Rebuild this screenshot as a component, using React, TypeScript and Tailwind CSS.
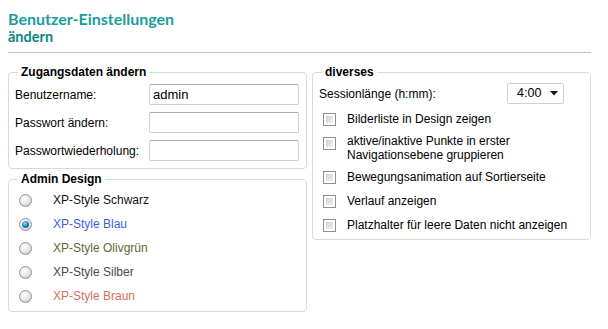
import React from 'react';

type Design = { label: string; color: string; checked?: boolean };

const designs: Design[] = [
  { label: 'XP-Style Schwarz', color: 'text-[#111111]' },
  { label: 'XP-Style Blau', color: 'text-[#3d5ee0]', checked: true },
  { label: 'XP-Style Olivgrün', color: 'text-[#66662e]' },
  { label: 'XP-Style Silber', color: 'text-[#4a4a4a]' },
  { label: 'XP-Style Braun', color: 'text-[#d3705c]' },
];

const options = [
  { label: 'Bilderliste in Design zeigen' },
  { label: 'aktive/inaktive Punkte in erster Navigationsebene gruppieren', multi: true },
  { label: 'Bewegungsanimation auf Sortierseite' },
  { label: 'Verlauf anzeigen' },
  { label: 'Platzhalter für leere Daten nicht anzeigen' },
];

function Radio({ checked }: { checked?: boolean }) {
  return (
    <span className="flex h-[13px] w-[13px] items-center justify-center rounded-full border border-[#8f9090] bg-[radial-gradient(circle_at_35%_30%,#ffffff,#e4e4e4_55%,#c8c8c8)]">
      {checked && (
        <span className="h-[7px] w-[7px] rounded-full bg-[radial-gradient(circle_at_40%_35%,#8fdcff,#1b86c4_50%,#0b3f66)]" />
      )}
    </span>
  );
}

function Checkbox() {
  return (
    <span className="block h-[13px] w-[13px] border border-[#8e8f8f] bg-white p-[2px]">
      <span className="block h-full w-full bg-gradient-to-br from-[#cfcfcf] to-[#f4f4f4]" />
    </span>
  );
}

function Field({ label, value }: { label: string; value?: string }) {
  return (
    <div className="flex h-[21px] items-center">
      <span className="w-[134px]">{label}</span>
      <div className="flex h-[21px] w-[150px] items-center rounded-[2px] border border-[#cdd1d5] border-t-[#a9adb1] px-[3px] text-[13px]">
        {value}
      </div>
    </div>
  );
}

export default function App() {
  return (
    <div className="h-[329px] w-[608px] bg-white pl-2 font-['Liberation_Sans',Arial,sans-serif] text-[12px] text-black">
      <div className="pt-[10px] font-['Lato',sans-serif] font-bold leading-[18px]">
        <div className="text-[16px] text-[#1a9d9d]">Benutzer-Einstellungen</div>
        <div className="text-[14.5px] text-[#0c8585]">ändern</div>
      </div>
      <div className="mt-[6px] w-[583px] border-t border-[#c0c0c0]" />

      <div className="mt-[12px] grid grid-cols-[299px_279px] items-start gap-[5px]">
        <div>
          <fieldset className="rounded-[4px] border border-[#d3dbe3] px-[6px] pb-[7px]">
            <legend className="ml-[3px] px-[3px] font-bold leading-[14px]">Zugangsdaten ändern</legend>
            <div className="mt-[5px] flex flex-col gap-[7px]">
              <Field label="Benutzername:" value="admin" />
              <Field label="Passwort ändern:" />
              <Field label="Passwortwiederholung:" />
            </div>
          </fieldset>

          <fieldset className="mt-[3px] rounded-[4px] border border-[#d3dbe3] px-[6px] pb-[3px]">
            <legend className="ml-[3px] px-[3px] font-bold leading-[14px]">Admin Design</legend>
            <div className="mt-[2px]">
              {designs.map((d) => (
                <div key={d.label} className="flex h-[24px] items-center">
                  <span className="w-[38px] pl-[4px]">
                    <Radio checked={d.checked} />
                  </span>
                  <span className={d.color}>{d.label}</span>
                </div>
              ))}
            </div>
          </fieldset>
        </div>

        <fieldset className="rounded-[4px] border border-[#d3dbe3] px-[6px] pb-[2px]">
          <legend className="ml-[3px] px-[3px] font-bold leading-[14px]">diverses</legend>
          <div className="mt-[4px] flex h-[21px] items-center">
            <span className="w-[188px]">Sessionlänge (h:mm):</span>
            <div className="flex h-[21px] w-[57px] items-center justify-between rounded-[2px] border border-[#cdd1d5] pl-[9px] pr-[5px] text-[12.5px]">
              <span>4:00</span>
              <svg width="8" height="5" viewBox="0 0 8 5">
                <path d="M0 0h8L4 4.5z" fill="#111" />
              </svg>
            </div>
          </div>
          <div className="mt-[3px]">
            {options.map((o) => (
              <div key={o.label} className={o.multi ? 'flex py-[3px]' : 'flex py-[5px]'}>
                <span className={o.multi ? 'w-[28px] pl-[4px] pt-[3px]' : 'w-[28px] pl-[4px] pt-[1px]'}>
                  <Checkbox />
                </span>
                <span className={o.multi ? 'w-[215px] leading-[14px]' : 'leading-[14px]'}>{o.label}</span>
              </div>
            ))}
          </div>
        </fieldset>
      </div>
    </div>
  );
}
